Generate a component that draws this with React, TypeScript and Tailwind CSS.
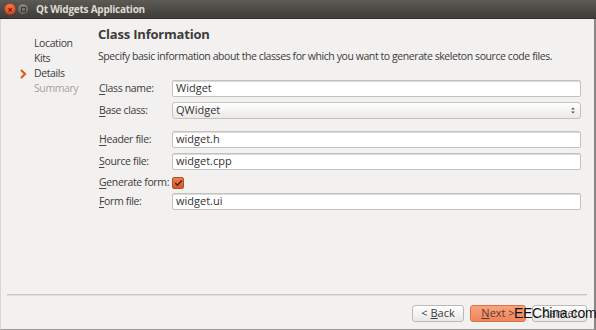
import React from 'react';

const FONT = { fontFamily: '"Open Sans", "Noto Sans", sans-serif' };

const steps = [
  { label: 'Location', state: 'done' },
  { label: 'Kits', state: 'done' },
  { label: 'Details', state: 'current' },
  { label: 'Summary', state: 'todo' },
];

function Mnemonic({ text }: { text: string }) {
  return (
    <span>
      <span className="underline underline-offset-2 decoration-[#4a4a4a]">{text[0]}</span>
      {text.slice(1)}
    </span>
  );
}

function Label({ text }: { text: string }) {
  return (
    <div className="w-[73px] shrink-0 whitespace-nowrap text-[10.5px] tracking-[-0.35px] text-[#3c3c3c]">
      <Mnemonic text={text} />
    </div>
  );
}

function TextField({ value }: { value: string }) {
  return (
    <div className="flex-1 h-[17px] bg-white border border-[#c4c2be] rounded-[2px] shadow-[inset_0_1px_0_#dcdad6] flex items-center px-[3px] text-[11px] text-[#333]">
      {value}
    </div>
  );
}

export default function App() {
  return (
    <div className="w-[596px] h-[330px] bg-[#f2f1f0] flex flex-col overflow-hidden relative" style={FONT}>
      {/* title bar */}
      <div className="h-[19px] shrink-0 bg-gradient-to-b from-[#5c5a55] to-[#3e3d39] flex items-center border-b border-[#2e2d2a]">
        <div className="w-[36px] shrink-0 flex items-center gap-[1px] pl-[4px]">
          <div className="shrink-0 w-[12px] h-[12px] rounded-full bg-gradient-to-b from-[#f07a50] to-[#d9471d] border border-[#a8401f] flex items-center justify-center">
            <span className="text-[9px] leading-none font-bold text-[#5a1a08]">×</span>
          </div>
          <div className="shrink-0 w-[12px] h-[12px] rounded-full bg-gradient-to-b from-[#8a8780] to-[#66635d] border border-[#4c4a45] flex items-center justify-center">
            <div className="w-[5px] h-[5px] border border-[#3d3b37]" />
          </div>
        </div>
        <span className="whitespace-nowrap text-[10px] font-bold text-[#dfdbd2] tracking-[-0.25px]">Qt Widgets Application</span>
      </div>

      <div className="flex-1 flex border-r-2 border-[#8a8885] border-b border-b-[#9a9894] border-l border-l-[#d8d6d3]">
        <div className="flex-1 flex flex-col">
          <div className="flex flex-1">
            {/* sidebar */}
            <div className="w-[97px] shrink-0 pt-[17px] pl-[19px] flex flex-col">
              {steps.map((s) => (
                <div key={s.label} className="h-[15px] flex items-center text-[10.5px] tracking-[-0.4px]">
                  <span className="w-[14px] flex items-center">
                    {s.state === 'current' && (
                      <svg width="7" height="10" viewBox="0 0 7 10">
                        <path d="M1 1 L5 5 L1 9" fill="none" stroke="#e2571e" strokeWidth="2.2" />
                      </svg>
                    )}
                  </span>
                  <span className={s.state === 'todo' ? 'text-[#a5a39f]' : 'text-[#3c3c3c]'}>{s.label}</span>
                </div>
              ))}
            </div>

            {/* content */}
            <div className="flex-1 pr-[13px] pt-[6px] flex flex-col">
              <div className="text-[13px] leading-[18px] font-bold text-[#3c3c3c] tracking-[-0.2px]">Class Information</div>
              <div className="mt-[6px] whitespace-nowrap text-[10.5px] leading-[14px] text-[#3c3c3c] tracking-[-0.42px]">
                Specify basic information about the classes for which you want to generate skeleton source code files.
              </div>

              <div className="mt-[17px] flex flex-col pl-[1px]">
                <div className="flex items-center h-[17px]">
                  <Label text="Class name:" />
                  <TextField value="Widget" />
                </div>
                <div className="flex items-center h-[17px] mt-[5px]">
                  <Label text="Base class:" />
                  <div className="flex-1 h-[17px] bg-gradient-to-b from-white to-[#ebeae8] border border-[#c4c2be] rounded-[3px] flex items-center px-[3px] text-[11px] text-[#333]">
                    <span className="flex-1">QWidget</span>
                    <svg width="6" height="9" viewBox="0 0 6 9" className="mr-[1px]">
                      <path d="M1 3.5 L3 1.5 L5 3.5 Z" fill="#555" />
                      <path d="M1 5.5 L3 7.5 L5 5.5 Z" fill="#555" />
                    </svg>
                  </div>
                </div>
                <div className="flex items-center h-[17px] mt-[12px]">
                  <Label text="Header file:" />
                  <TextField value="widget.h" />
                </div>
                <div className="flex items-center h-[17px] mt-[5px]">
                  <Label text="Source file:" />
                  <TextField value="widget.cpp" />
                </div>
                <div className="flex items-center h-[17px] mt-[4px]">
                  <Label text="Generate form:" />
                  <div className="w-[12px] h-[12px] rounded-[2px] bg-gradient-to-b from-[#ea7d50] to-[#d8582a] border border-[#b44c24] flex items-center justify-center">
                    <svg width="9" height="8" viewBox="0 0 9 8">
                      <path d="M1.2 4 L3.5 6.3 L7.8 1.5" fill="none" stroke="#4a2010" strokeWidth="1.4" />
                    </svg>
                  </div>
                </div>
                <div className="flex items-center h-[17px] mt-[2px]">
                  <Label text="Form file:" />
                  <TextField value="widget.ui" />
                </div>
              </div>
            </div>
          </div>

          {/* footer */}
          <div className="mx-[6px] h-[2px] border-t border-[#c9c7c3] border-b border-b-[#e2e0dd] mr-[7px]" />
          <div className="h-[33px] flex items-start justify-end pt-[9px] pr-[7px] gap-[6px]">
            <button className="w-[52px] h-[17px] rounded-[3px] border border-[#bcbab6] bg-gradient-to-b from-white to-[#e9e8e6] text-[11px] text-[#3c3c3c] flex items-center justify-center">
              &lt; <span className="underline ml-[3px]">B</span>ack
            </button>
            <button className="w-[56px] h-[17px] rounded-[3px] border border-[#d7744a] bg-gradient-to-b from-[#f7a27c] to-[#f0845a] text-[11px] text-[#5a3b2e] flex items-center justify-center">
              <span className="underline">N</span>ext &gt;
            </button>
            <button className="w-[55px] h-[17px] rounded-[3px] border border-[#bcbab6] bg-gradient-to-b from-white to-[#e9e8e6] text-[11px] text-[#6a6a6a] flex items-center justify-center">
              Cancel
            </button>
          </div>
        </div>
      </div>

      {/* watermark overlay */}
      <div
        className="absolute left-[514px] top-[304px] text-[14px] leading-[18px] text-[#111] tracking-[-0.3px]"
        style={{ fontFamily: '"Liberation Sans", sans-serif' }}
      >
        EEChina.com
      </div>
    </div>
  );
}
